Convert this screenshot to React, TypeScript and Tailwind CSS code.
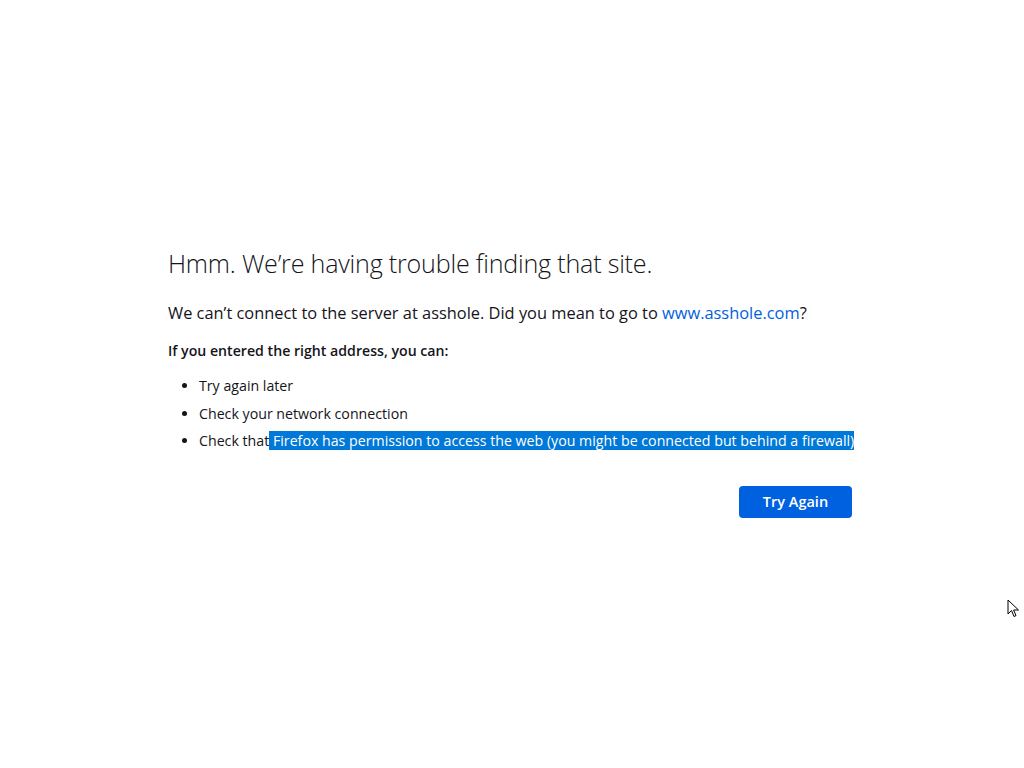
export default function App() {
  return (
    <div className="relative h-[768px] w-[1024px] bg-white font-['Open_Sans',sans-serif] text-[#15141a]">
      <div className="mx-auto w-[688px] pt-[245px] pr-[4px]">
        <h1 className="text-[25.1px] font-light leading-[36px] tracking-[-0.2px]">
          Hmm. We’re having trouble finding that site.
        </h1>
        <p className="mt-[20px] text-[16.4px] leading-[24px]">
          We can’t connect to the server at asshole. Did you mean to go to{' '}
          <a className="text-[#0061e0]">www.asshole.com</a>?
        </p>
        <p className="mt-[14px] text-[14.15px] font-semibold leading-[24px]">
          If you entered the right address, you can:
        </p>
        <ul className="mt-[9px] list-disc pl-[31px] text-[14.2px] leading-[27.5px]">
          <li>Try again later</li>
          <li>Check your network connection</li>
          <li className="whitespace-nowrap">
            Check that
            <span className="bg-[#0078d7] text-white">
              {' '}Firefox has permission to access the web (you might be connected but behind a firewall)
            </span>
          </li>
        </ul>
        <div className="mt-[31px] flex justify-end">
          <button className="h-[32px] w-[113px] rounded-[4px] bg-[#0061e0] text-[14.5px] font-semibold text-white">
            Try Again
          </button>
        </div>
      </div>
      <svg
        className="absolute left-[1007px] top-[599px]"
        width="13"
        height="20"
        viewBox="0 0 13 20"
      >
        <path
          d="M1 1 L1 15 L4.5 11.5 L7 17.5 L9 16.6 L6.6 11 L11.5 11 Z"
          fill="#fff"
          stroke="#000"
          strokeWidth="1"
          strokeLinejoin="round"
        />
      </svg>
    </div>
  );
}
